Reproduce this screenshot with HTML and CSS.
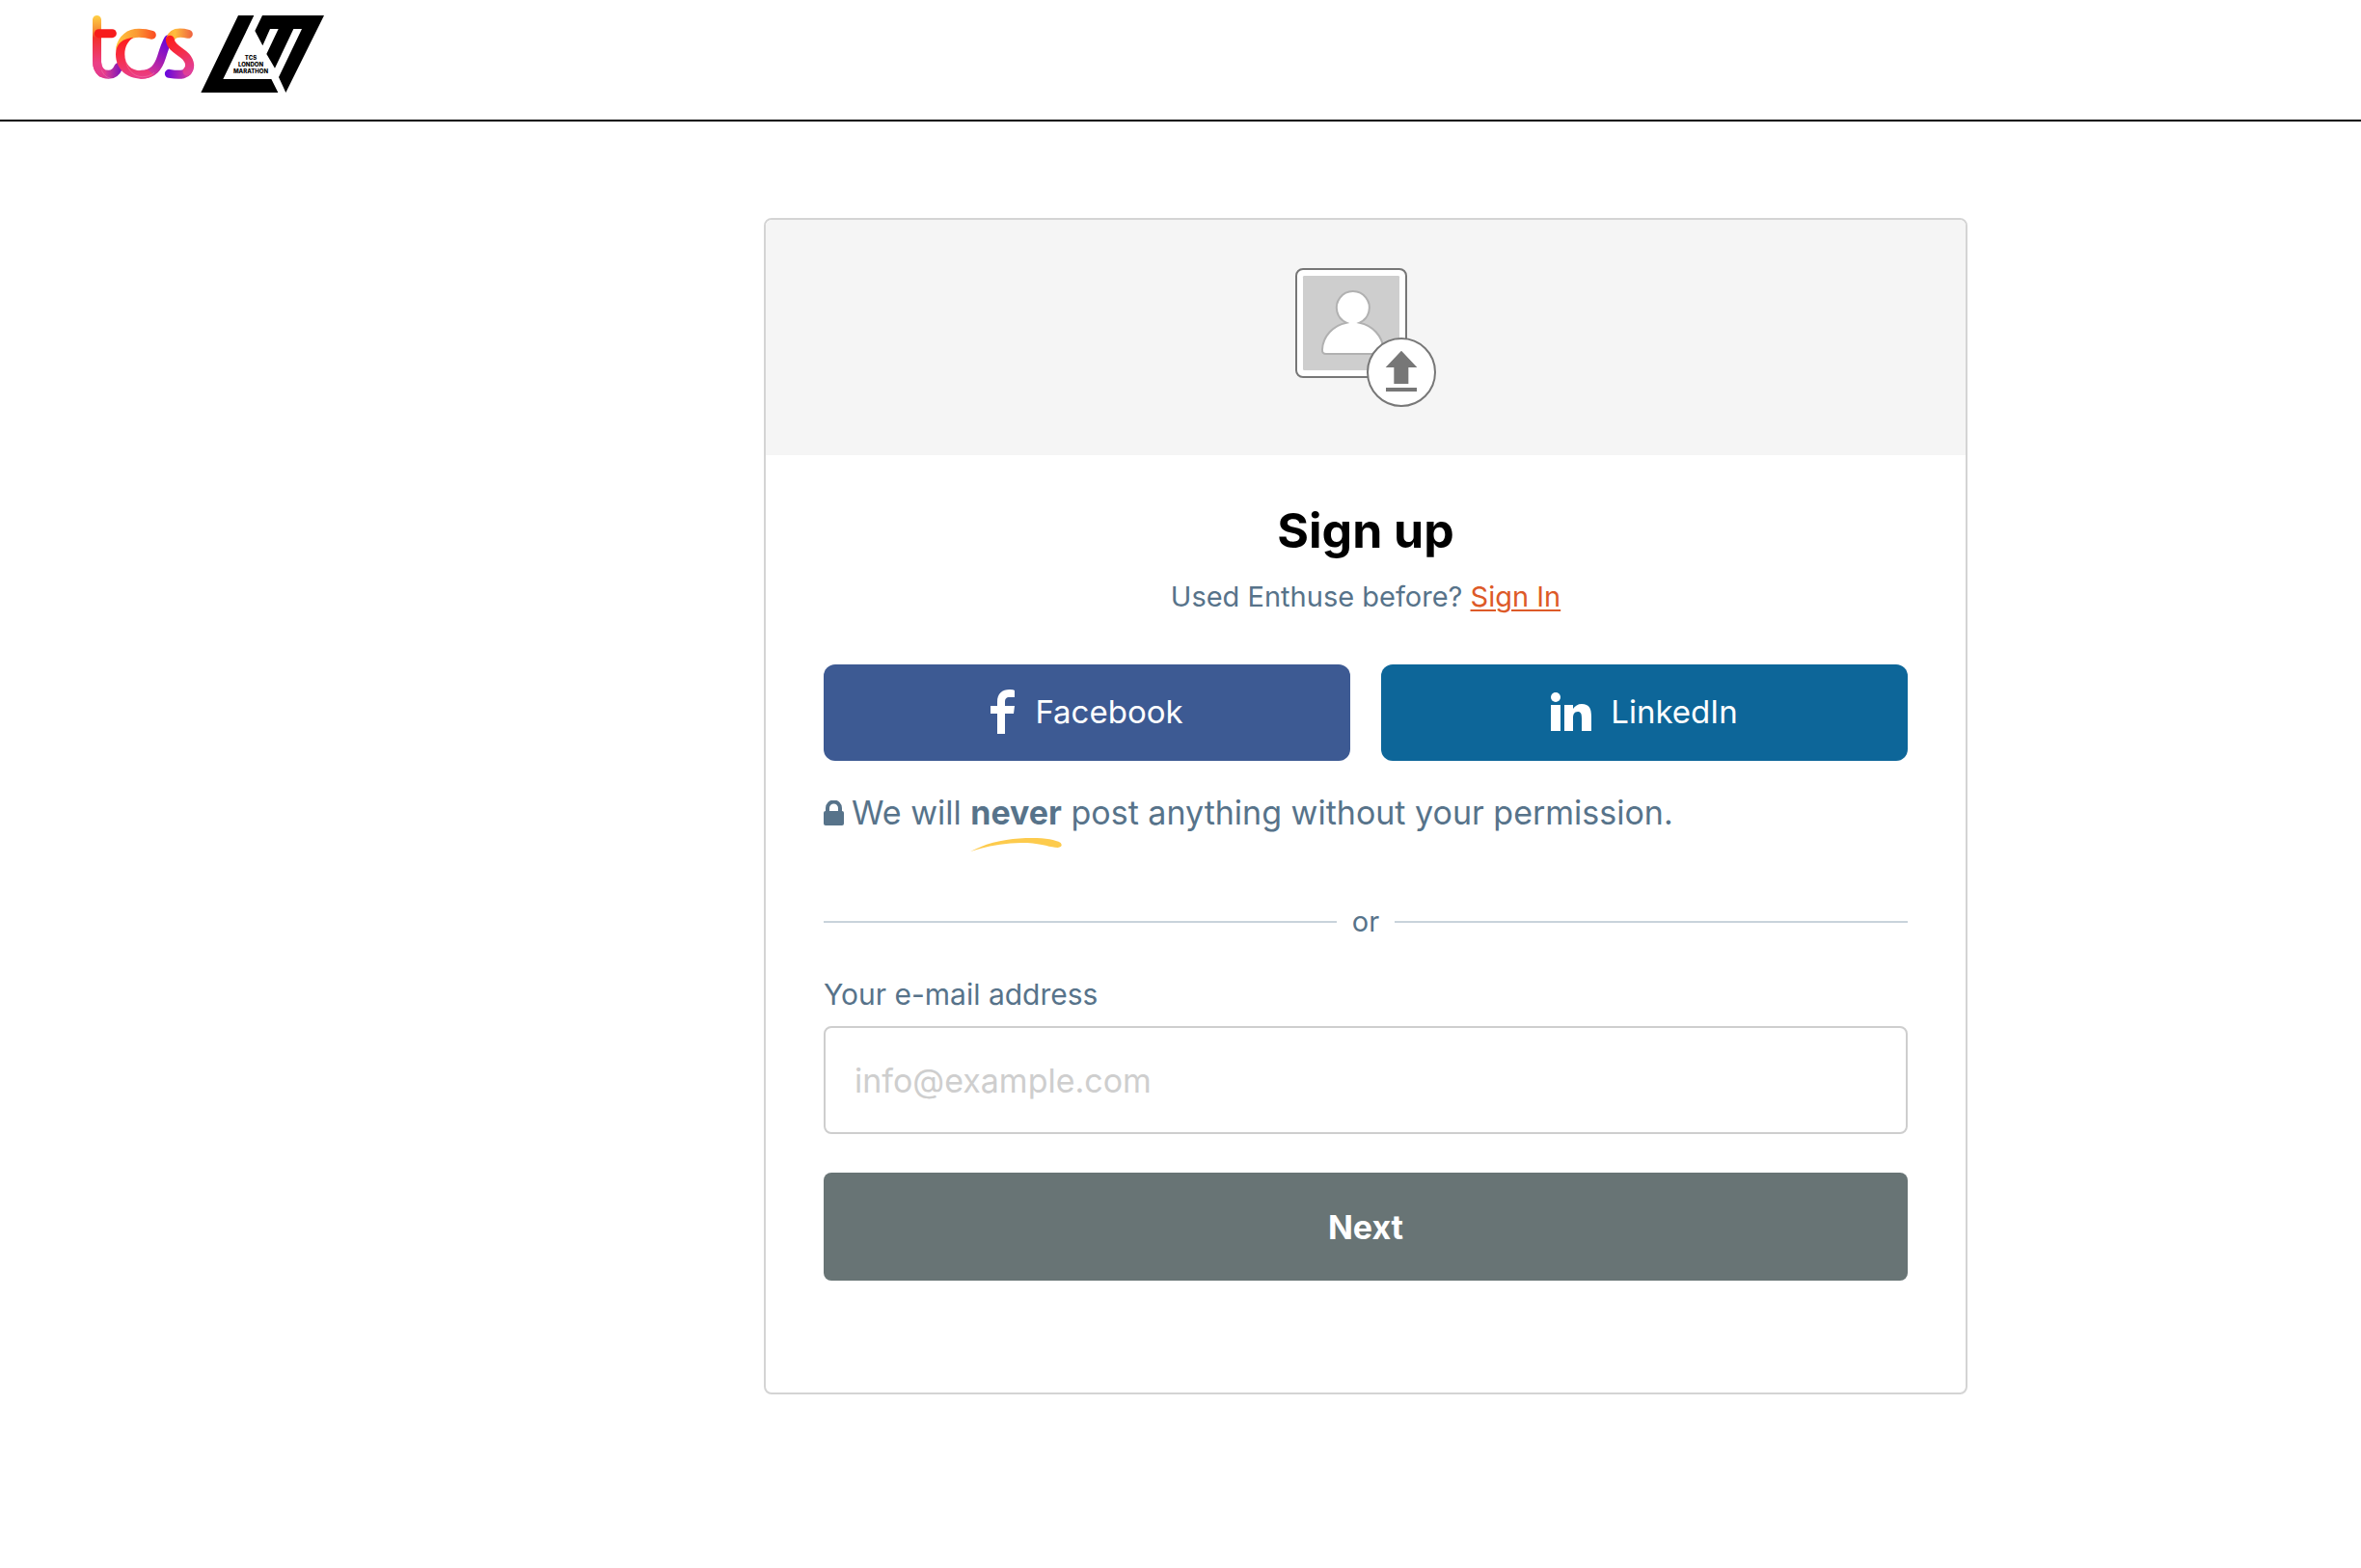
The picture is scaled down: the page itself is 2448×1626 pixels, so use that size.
FILE: index.html
```html
<!doctype html>
<html lang="en">
    <head>
        <meta charset="utf-8">
        <meta name="viewport" content="width=device-width, initial-scale=1">
        <title>Sign up</title>
        <link rel="stylesheet" href="styles.css">
    </head>
    <body>
        <header class="header">
            <a class="logo" href="#" aria-label="TCS London Marathon">
                <svg viewBox="48 48 720 240" fill="none">
                    <defs>
                        <linearGradient id="stem" gradientUnits="userSpaceOnUse" x1="0" y1="48" x2="0" y2="245">
                            <stop offset="0" stop-color="#ffd044"/>
                            <stop offset=".25" stop-color="#f58a35"/>
                            <stop offset=".35" stop-color="#f2302c"/>
                            <stop offset=".75" stop-color="#ec3f85"/>
                            <stop offset="1" stop-color="#e23a90"/>
                        </linearGradient>
                        <linearGradient id="foot" gradientUnits="userSpaceOnUse" x1="62" y1="0" x2="136" y2="0">
                            <stop offset="0" stop-color="#ec3f85"/>
                            <stop offset=".4" stop-color="#d63a95"/>
                            <stop offset="1" stop-color="#7d14b8"/>
                        </linearGradient>
                        <linearGradient id="arc" gradientUnits="userSpaceOnUse" x1="125" y1="0" x2="245" y2="0">
                            <stop offset="0" stop-color="#ffc33f"/>
                            <stop offset=".5" stop-color="#fb9a33"/>
                            <stop offset="1" stop-color="#fb4a22"/>
                        </linearGradient>
                        <linearGradient id="bowl" gradientUnits="userSpaceOnUse" x1="0" y1="115" x2="0" y2="245">
                            <stop offset="0" stop-color="#fd1c1c"/>
                            <stop offset=".4" stop-color="#f92a3a"/>
                            <stop offset="1" stop-color="#e93f8c"/>
                        </linearGradient>
                        <linearGradient id="link" gradientUnits="userSpaceOnUse" x1="205" y1="235" x2="280" y2="130">
                            <stop offset="0" stop-color="#e93f8c"/>
                            <stop offset=".5" stop-color="#a81fb0"/>
                            <stop offset="1" stop-color="#6a08d8"/>
                        </linearGradient>
                        <linearGradient id="cap" gradientUnits="userSpaceOnUse" x1="280" y1="0" x2="360" y2="0">
                            <stop offset="0" stop-color="#ffa83a"/>
                            <stop offset=".3" stop-color="#ffbd3c"/>
                            <stop offset="1" stop-color="#ee6040"/>
                        </linearGradient>
                        <linearGradient id="spine" gradientUnits="userSpaceOnUse" x1="290" y1="115" x2="345" y2="225">
                            <stop offset="0" stop-color="#fd1c1c"/>
                            <stop offset=".4" stop-color="#f72a40"/>
                            <stop offset="1" stop-color="#e0409a"/>
                        </linearGradient>
                        <linearGradient id="tail" gradientUnits="userSpaceOnUse" x1="272" y1="0" x2="355" y2="0">
                            <stop offset="0" stop-color="#6205e0"/>
                            <stop offset="1" stop-color="#e23f95"/>
                        </linearGradient>
                    </defs>
                    <g stroke-width="27" stroke-linecap="round">
                        <path stroke="url(#foot)" d="M62 196C63 219 78 232 98 232C112 232 122 224 129 208"/>
                        <path stroke="url(#stem)" d="M61.500 61.500V190C61.500 208 67 219 76 226"/>
                        <path stroke="#f71b1b" d="M67 104H109"/>
                        <path stroke="url(#arc)" d="M134 150C140 120 162 103 192 103C207 103 220 105 232 109"/>
                        <path stroke="url(#link)" d="M200 232C236 231 252 211 263 176C270 153 276 135 284 122"/>
                        <path stroke="url(#cap)" d="M290 122C296 101 318 99 346 106"/>
                        <path stroke="url(#tail)" d="M286 229C320 235 347 235 350 205"/>
                        <path stroke="url(#spine)" d="M289 124C293 160 345 160 350 202C350 211 347 217 342 222"/>
                    </g>
                    <path fill="url(#bowl)" d="M175 116C143 120 120 134 120 169C120 215 154 245 199 245C216 245 229 241 238 234L219 216C212 219 206 220 198 220C168 220 148 201 148 169C148 145 158 128 175 116Z"/>
                    <path stroke="#f9a0c4" stroke-width="1" d="M149 177C153 216 175 239 203 239C218 239 229 235 240 226M76 218C82 233 91 241 103 243"/>
                    <path fill="#000" d="M501 48H550L454 246H604L625 288H385Z"/>
                    <path fill="#000" d="M576 48H768L649 288L627 240L699 90H673L615 212L589 168L626 90H600L577 142L553 96Z"/>
                    <g class="logo-text" fill="#000" text-anchor="middle">
                        <text x="540" y="187">TCS</text>
                        <text x="540" y="208">LONDON</text>
                        <text x="540" y="229">MARATHON</text>
                    </g>
                </svg>
            </a>
        </header>

        <main class="page">
            <section class="card">
                <div class="card-top">
                    <button class="avatar" type="button" aria-label="Upload a photo">
                        <svg viewBox="39 39 438 432">
                            <rect x="42" y="42" width="342" height="336" rx="21" fill="#fff" stroke="#777" stroke-width="6"/>
                            <rect x="63" y="63" width="300" height="294" rx="4" fill="#cecece"/>
                            <path fill="#fff" stroke="#b1b1b1" stroke-width="6" d="M198 209A51 51 0 1 1 239 209C279 217 310 250 314 292Q315 306 301 306H135Q122 306 123 292C125 250 158 217 198 209Z"/>
                            <circle cx="369" cy="363" r="105" fill="#fff" stroke="#777" stroke-width="6"/>
                            <path fill="#777" d="M369 296L418 348H391V399H346V348H320ZM321 411H417V423H321Z"/>
                        </svg>
                    </button>
                </div>

                <div class="card-body">
                    <h1>Sign up</h1>
                    <p class="signin">Used Enthuse before? <a href="#">Sign In</a></p>

                    <div class="social">
                        <button class="btn facebook" type="button">
                            <svg class="icon-fb" viewBox="0 0 26 46" fill="#fff"><path d="M7 46V25H0V17H7V13C7 4 12 0 20 0Q24 0 25 1V8H20C16 8 15 10 15 13V17H25L24 25H15V46Z"/></svg>
                            Facebook
                        </button>
                        <button class="btn linkedin" type="button">
                            <svg class="icon-in" viewBox="0 0 42 40" fill="#fff"><circle cx="5" cy="5" r="5"/><path d="M0 13H10V40H0ZM14 13H23V17C25 14 28 12 32 12C40 12 42 17 42 25V40H32V27C32 22 31 20 28 20C24 20 23 23 23 27V40H14Z"/></svg>
                            LinkedIn
                        </button>
                    </div>

                    <p class="privacy">
                        <svg class="icon-lock" viewBox="0 0 21 26"><rect y="11" width="21" height="15" rx="2" fill="#57738a"/><path d="M4 13V8a6 6 0 0 1 13 0V13" fill="none" stroke="#57738a" stroke-width="4"/></svg>
                        <span>We will <strong class="never">never<svg class="swoosh" viewBox="0 0 96 14"><path fill="#fdcb4d" d="M0 14C22 3 44 0 65 0C79 0 90 2 95 5Q98 9 92 10C85 10 76 6 60 5C39 4 19 8 0 14Z"/></svg></strong> post anything without your permission.</span>
                    </p>

                    <div class="or">or</div>

                    <form>
                        <label for="email">Your e-mail address</label>
                        <input id="email" type="email" placeholder="info@example.com">
                        <button class="next" type="submit">Next</button>
                    </form>
                </div>
            </section>
        </main>
    </body>
</html>
```
FILE: styles.css
```css
* { box-sizing: border-box; }
body { margin: 0; background: #fff; color: #57738a; font: 29px/42px Inter, sans-serif; }
button, input { font-family: inherit; }
button { border: 0; cursor: pointer; }
svg { display: block; }

/*Header*/
.header { padding: 16px 96px 28px; border-bottom: 2px solid #000; }
.logo { display: block; width: 240px; }
.logo-text { font-size: 18px; font-weight: 800; }

/*Card*/
.page { display: flex; justify-content: flex-end; padding: 100px 16.6667% 180px; }
.card { width: 100%; max-width: 1248px; flex-shrink: 0; border: 2px solid #d4d4d4; border-radius: 8px; overflow: hidden; }
.card-top { display: flex; justify-content: center; padding: 50px; background: #f5f5f5; }
.avatar { padding: 0; background: none; }
.avatar svg { width: 146px; height: 144px; }
.card-body { padding: 42px 60px 116px; }

h1 { margin: 0; color: #000; font-size: 50px; line-height: 72px; font-weight: 700; text-align: center; }
.signin { margin: 12px 0 0; text-align: center; }
.signin a { color: #dd5a28; text-decoration-thickness: 2px; text-underline-offset: 3px; }

/*Social buttons*/
.social { display: grid; grid-template-columns: 1fr 1fr; gap: 32px; margin-top: 49px; }
.btn { display: flex; align-items: center; justify-content: center; gap: 20px; height: 100px; padding: 0 0 2px; border-radius: 12px; color: #fff; font-size: 33px; }
.facebook { background: #3d5a93; }
.linkedin { background: #0d6699; }
.icon-fb { width: 26px; height: 46px; }
.icon-in { width: 42px; height: 40px; }

.privacy { display: flex; align-items: center; gap: 8px; margin: 30px 0 0; font-size: 34px; line-height: 48px; }
.icon-lock { width: 21px; height: 26px; }
.never { position: relative; }
.swoosh { position: absolute; left: 0; top: calc(100% + 6px); width: 100%; height: 14px; }

.or { display: flex; align-items: center; gap: 16px; margin-top: 68px; }
.or::before, .or::after { content: ""; flex: 1; height: 2px; background: #c9d3db; }

/*Form*/
form { display: flex; flex-direction: column; margin-top: 33px; }
label { font-size: 30px; }
input { height: 112px; margin-top: 12px; padding: 0 30px; border: 2px solid #cecece; border-radius: 8px; color: #57738a; font-size: 34px; }
input::placeholder { color: #cecece; }
.next { height: 112px; margin-top: 40px; border-radius: 8px; background: #687475; color: #fff; font-size: 34px; font-weight: 700; }
```
